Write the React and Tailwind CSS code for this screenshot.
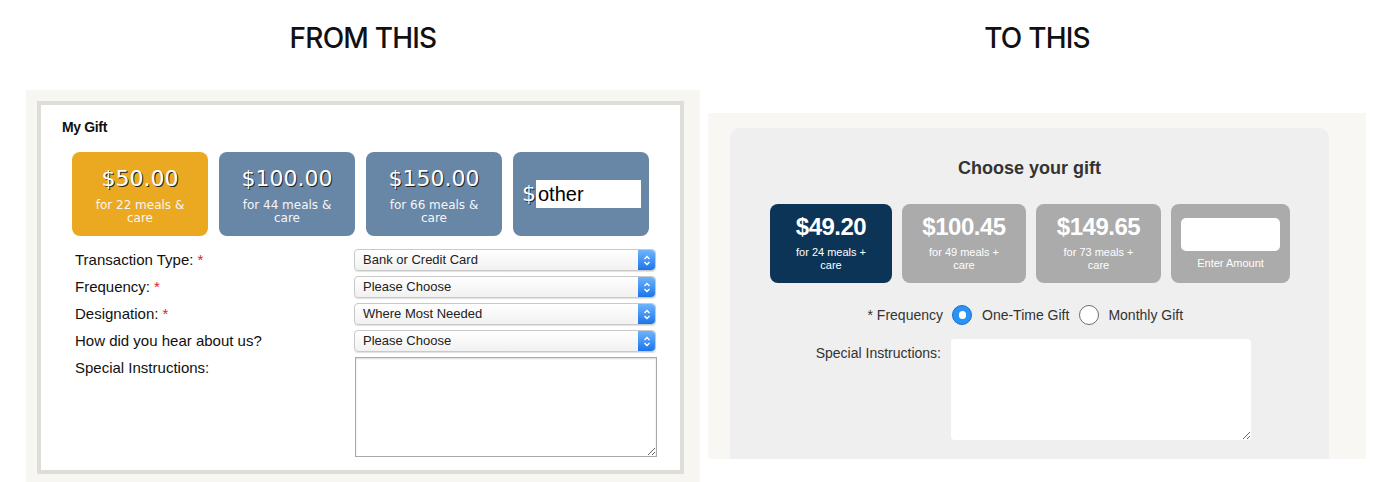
import React from "react";

const oldGifts = [
  { amount: "$50.00", line1: "for 22 meals &", active: true },
  { amount: "$100.00", line1: "for 44 meals &" },
  { amount: "$150.00", line1: "for 66 meals &" },
];

const newGifts = [
  { amount: "$49.20", line1: "for 24 meals +", w: "w-[122px]", active: true },
  { amount: "$100.45", line1: "for 49 meals +", w: "w-[124px]" },
  { amount: "$149.65", line1: "for 73 meals +", w: "w-[125px]" },
];

const rows = [
  { label: "Transaction Type:", req: true, value: "Bank or Credit Card" },
  { label: "Frequency:", req: true, value: "Please Choose" },
  { label: "Designation:", req: true, value: "Where Most Needed" },
  { label: "How did you hear about us?", value: "Please Choose" },
];

function FakeSelect({ value }) {
  return (
    <div className="flex h-[22px] w-[302px] items-stretch rounded-[4px] border border-[#c9c9c9] bg-gradient-to-b from-white to-[#f1f1f1] shadow-[0_1px_1px_rgba(0,0,0,0.12)]">
      <div className="flex flex-1 items-center pl-[8px] text-[13px] text-[#222]">{value}</div>
      <div className="flex w-[17px] flex-col items-center justify-center rounded-r-[4px] bg-gradient-to-b from-[#6db4fb] to-[#1b74ea]">
        <svg width="8" height="13" viewBox="0 0 8 13" fill="none" stroke="white" strokeWidth="1.4">
          <path d="M1.5 5 L4 2.5 L6.5 5" />
          <path d="M1.5 8 L4 10.5 L6.5 8" />
        </svg>
      </div>
    </div>
  );
}

function Radio({ checked }) {
  if (checked) {
    return (
      <div className="flex h-[20px] w-[20px] items-center justify-center rounded-full border border-[#1a6fd1] bg-[#2a93f4]">
        <div className="h-[8px] w-[7px] rounded-full bg-white" />
      </div>
    );
  }
  return <div className="h-[20px] w-[20px] rounded-full border border-[#6f6f6f] bg-white" />;
}

export default function App() {
  return (
    <div className="flex h-[482px] w-[1400px] overflow-hidden bg-white font-['Liberation_Sans',Arial,sans-serif]">
      {/* FROM THIS */}
      <div className="ml-[26px] flex w-[674px] flex-col">
        <div className="flex h-[76px] items-center justify-center font-['Inter',sans-serif] text-[28px] font-medium tracking-[-0.8px] text-[#111]">
          FROM THIS
        </div>
        <div className="mt-[14px] flex-1 bg-[#f7f6f2] pl-[11px] pr-[16px] pt-[11px]">
          <div className="h-[373px] w-[647px] border-4 border-[#deded8] bg-white pl-[21px] pt-[13px]">
            <div className="text-[14px] font-bold leading-[18px] tracking-tight text-[#111]">My Gift</div>

            <div className="ml-[10px] mt-[16px] flex gap-[11px]">
              {oldGifts.map((g) => (
                <div
                  key={g.amount}
                  className={`flex h-[84px] w-[136px] flex-col items-center rounded-[8px] pt-[14px] font-['DejaVu_Sans',sans-serif] text-white ${
                    g.active ? "bg-[#eaa920]" : "bg-[#6886a6]"
                  }`}
                >
                  <div className="text-[22px] leading-[26px] [text-shadow:1px_1px_0_#222]">{g.amount}</div>
                  <div className="mt-[7px] text-center text-[12px] leading-[13px] text-[#f6f6f6]">
                    {g.line1}
                    <br />
                    care
                  </div>
                </div>
              ))}
              <div className="flex h-[84px] w-[136px] items-center rounded-[8px] bg-[#6886a6] pl-[9px]">
                <span className="font-['DejaVu_Sans',sans-serif] text-[22px] leading-[26px] text-white [text-shadow:1px_1px_0_#222]">
                  $
                </span>
                <input
                  readOnly
                  value="other"
                  className="h-[28px] w-[105px] bg-white pl-[2px] text-[20px] text-black outline-none"
                />
              </div>
            </div>

            <div className="ml-[13px] mt-[13px] flex flex-col gap-[5px]">
              {rows.map((r) => (
                <div key={r.label} className="flex items-center">
                  <div className="w-[279px] text-[15px] leading-[22px] text-[#111]">
                    {r.label}
                    {r.req && <span className="ml-[4px] text-[#e21b1b]">*</span>}
                  </div>
                  <FakeSelect value={r.value} />
                </div>
              ))}
              <div className="flex items-start">
                <div className="w-[280px] text-[15px] leading-[22px] text-[#111]">Special Instructions:</div>
                <textarea
                  readOnly
                  className="h-[100px] w-[302px] border border-[#a9a9a9] bg-white shadow-[inset_0_1px_2px_rgba(0,0,0,0.15)] outline-none"
                />
              </div>
            </div>
          </div>
        </div>
      </div>

      {/* TO THIS */}
      <div className="ml-[8px] flex w-[658px] flex-col">
        <div className="flex h-[76px] items-center justify-center font-['Inter',sans-serif] text-[28px] font-medium tracking-[-0.8px] text-[#111]">
          TO THIS
        </div>
        <div className="mt-[37px] h-[346px] bg-[#f8f7f3] pl-[22px] pt-[15px]">
          <div className="h-[331px] w-[599px] rounded-t-[10px] bg-[#efefef] pt-[29px]">
            <div className="text-center text-[18px] font-bold leading-[22px] text-[#333]">Choose your gift</div>

            <div className="mt-[25px] flex justify-center gap-[10px] pl-[1px]">
              {newGifts.map((g) => (
                <div
                  key={g.amount}
                  className={`flex h-[79px] flex-col items-center rounded-[8px] pt-[9px] text-white ${g.w} ${
                    g.active ? "bg-[#0b3456]" : "bg-[#ababab]"
                  }`}
                >
                  <div className="text-[24px] font-bold leading-[28px] tracking-[-0.5px]">{g.amount}</div>
                  <div className="mt-[5px] text-center text-[11px] leading-[13px]">
                    {g.line1}
                    <br />
                    care
                  </div>
                </div>
              ))}
              <div className="flex h-[79px] w-[119px] flex-col items-center rounded-[8px] bg-[#ababab] pt-[14px]">
                <div className="h-[33px] w-[99px] rounded-[5px] bg-white" />
                <div className="mt-[6px] text-[11px] leading-[13px] text-white">Enter Amount</div>
              </div>
            </div>

            <div className="mt-[21px] flex h-[22px] items-center">
              <div className="w-[213px] text-right text-[14px] text-[#333]">* Frequency</div>
              <div className="ml-[9px] flex items-center text-[14px] text-[#333]">
                <Radio checked />
                <span className="ml-[10px]">One-Time Gift</span>
                <div className="ml-[10px]">
                  <Radio />
                </div>
                <span className="ml-[9px]">Monthly Gift</span>
              </div>
            </div>

            <div className="mt-[13px] flex items-start">
              <div className="w-[211px] pt-[6px] text-right text-[14px] leading-[16px] text-[#333]">
                Special Instructions:
              </div>
              <textarea
                readOnly
                className="ml-[10px] h-[101px] w-[300px] rounded-[4px] bg-white outline-none"
              />
            </div>
          </div>
        </div>
      </div>
    </div>
  );
}
